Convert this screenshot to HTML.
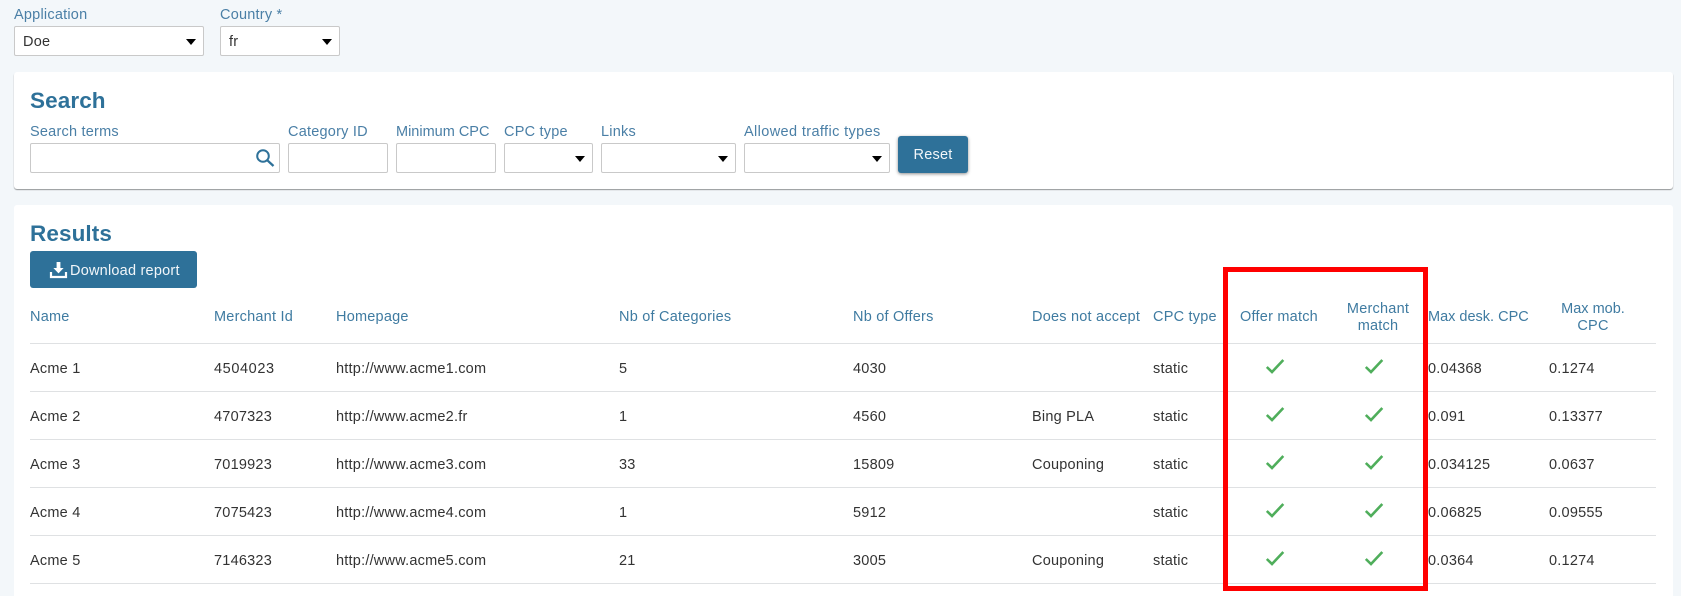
<!DOCTYPE html>
<html lang="en"><head><meta charset="utf-8"><title>Results</title>
<style>
html,body{margin:0;padding:0;width:1681px;height:596px;overflow:hidden;background:#f3f7fa}
body{position:relative;font-family:"Liberation Sans",Arial,sans-serif;font-size:14.5px;letter-spacing:.22px;color:#333}
div,span,svg{position:absolute}
.t{white-space:nowrap;line-height:20px;height:20px;margin-top:1px}
.l{color:#4a7fa6}
.h{color:#3f7ba1}
.c{transform:translateX(-50%);text-align:center}
.card{background:#fff;left:14px;width:1659px;border-radius:3px}
.f{background:#fff;border:1px solid #c9c9c9;border-radius:2px;box-sizing:border-box;height:30px}
.a{width:0;height:0;border-left:5.5px solid transparent;border-right:5.5px solid transparent;border-top:6px solid #000}
.title{font-weight:bold;font-size:22.5px;letter-spacing:.1px;color:#2e7199;line-height:28px;height:28px;white-space:nowrap}
.btn{background:#2e7199;color:#f2f6f9;border-radius:3px;text-align:center}
.ln{left:30px;width:1626px;height:1px;background:#dfe1e3}
.ck{width:20px;height:16px}
.ck path{fill:none;stroke:#4fae5b;stroke-width:2.6}
#box{left:1223px;top:267px;width:205px;height:324px;box-sizing:border-box;border:5px solid #ff0000}
</style></head><body>

<div class="t l" style="left:14px;top:4px">Application</div>
<div class="f" style="left:14px;top:26px;width:190px"></div>
<div class="t" style="left:23px;top:31px">Doe</div>
<div class="a" style="left:185.5px;top:39px"></div>
<div class="t l" style="left:220px;top:4px">Country *</div>
<div class="f" style="left:220px;top:26px;width:120px"></div>
<div class="t" style="left:229px;top:31px">fr</div>
<div class="a" style="left:321.5px;top:39px"></div>

<div class="card" style="top:72px;height:117px;box-shadow:0 1px 1px rgba(0,0,0,.4)"></div>
<div class="title" style="left:30px;top:87px">Search</div>
<div class="t l" style="left:30px;top:121px">Search terms</div>
<div class="f" style="left:30px;top:143px;width:250px"></div>
<svg style="left:255px;top:148px" width="20" height="19" viewBox="0 0 20 19"><circle cx="8" cy="8" r="5.8" fill="none" stroke="#2e7199" stroke-width="2"/><path d="M12.2 12.2L18.5 18" fill="none" stroke="#2e7199" stroke-width="2.3"/></svg>
<div class="t l" style="left:288px;top:121px">Category ID</div>
<div class="f" style="left:288px;top:143px;width:100px"></div>
<div class="t l" style="left:396px;top:121px;letter-spacing:0">Minimum CPC</div>
<div class="f" style="left:396px;top:143px;width:100px"></div>
<div class="t l" style="left:504px;top:121px">CPC type</div>
<div class="f" style="left:504px;top:143px;width:89px"></div>
<div class="a" style="left:574.5px;top:156px"></div>
<div class="t l" style="left:601px;top:121px">Links</div>
<div class="f" style="left:601px;top:143px;width:135px"></div>
<div class="a" style="left:717.5px;top:156px"></div>
<div class="t l" style="left:744px;top:121px;letter-spacing:.38px">Allowed traffic types</div>
<div class="f" style="left:744px;top:143px;width:146px"></div>
<div class="a" style="left:871.5px;top:156px"></div>
<div class="btn" style="left:898px;top:136px;width:70px;height:37px;line-height:38px;white-space:nowrap;box-shadow:0 1px 3px rgba(0,0,0,.45)">Reset</div>

<div class="card" style="top:205px;height:391px;border-radius:3px 3px 0 0"></div>
<div class="title" style="left:30px;top:220px">Results</div>
<div class="btn" style="left:30px;top:251px;width:167px;height:37px"></div>
<svg style="left:49px;top:261px" width="19" height="18" viewBox="0 0 19 18"><path d="M7.6 1H11.4V7H14.6L9.5 12.4L4.4 7H7.6Z" fill="#fff"/><path d="M2 11V16H17V11" fill="none" stroke="#fff" stroke-width="2.2"/></svg>
<div class="t" style="left:70px;top:260px;color:#f2f6f9">Download report</div>

<!-- header -->
<div class="t h" style="left:30px;top:306px">Name</div>
<div class="t h" style="left:214px;top:306px">Merchant Id</div>
<div class="t h" style="left:336px;top:306px">Homepage</div>
<div class="t h" style="left:619px;top:306px">Nb of Categories</div>
<div class="t h" style="left:853px;top:306px">Nb of Offers</div>
<div class="t h" style="left:1032px;top:306px">Does not accept</div>
<div class="t h" style="left:1153px;top:306px">CPC type</div>
<div class="t h c" style="left:1279px;top:306px">Offer match</div>
<div class="t h c" style="left:1378px;top:298px">Merchant</div>
<div class="t h c" style="left:1378px;top:315px">match</div>
<div class="t h" style="left:1428px;top:306px;letter-spacing:0">Max desk. CPC</div>
<div class="t h c" style="left:1593px;top:298px;letter-spacing:0">Max mob.</div>
<div class="t h c" style="left:1593px;top:315px">CPC</div>

<div class="ln" style="top:343px"></div>
<div class="ln" style="top:391px"></div>
<div class="ln" style="top:439px"></div>
<div class="ln" style="top:487px"></div>
<div class="ln" style="top:535px"></div>
<div class="ln" style="top:583px"></div>

<!-- row 1 -->
<div class="t" style="left:30px;top:358px">Acme 1</div>
<div class="t" style="left:214px;top:358px;letter-spacing:.6px">4504023</div>
<div class="t" style="left:336px;top:358px">http://www.acme1.com</div>
<div class="t" style="left:619px;top:358px">5</div>
<div class="t" style="left:853px;top:358px">4030</div>
<div class="t" style="left:1153px;top:358px">static</div>
<div class="t" style="left:1428px;top:358px">0.04368</div>
<div class="t" style="left:1549px;top:358px">0.1274</div>
<!-- row 2 -->
<div class="t" style="left:30px;top:406px">Acme 2</div>
<div class="t" style="left:214px;top:406px">4707323</div>
<div class="t" style="left:336px;top:406px">http://www.acme2.fr</div>
<div class="t" style="left:619px;top:406px">1</div>
<div class="t" style="left:853px;top:406px">4560</div>
<div class="t" style="left:1032px;top:406px">Bing PLA</div>
<div class="t" style="left:1153px;top:406px">static</div>
<div class="t" style="left:1428px;top:406px">0.091</div>
<div class="t" style="left:1549px;top:406px">0.13377</div>
<!-- row 3 -->
<div class="t" style="left:30px;top:454px">Acme 3</div>
<div class="t" style="left:214px;top:454px">7019923</div>
<div class="t" style="left:336px;top:454px">http://www.acme3.com</div>
<div class="t" style="left:619px;top:454px">33</div>
<div class="t" style="left:853px;top:454px">15809</div>
<div class="t" style="left:1032px;top:454px">Couponing</div>
<div class="t" style="left:1153px;top:454px">static</div>
<div class="t" style="left:1428px;top:454px">0.034125</div>
<div class="t" style="left:1549px;top:454px">0.0637</div>
<!-- row 4 -->
<div class="t" style="left:30px;top:502px">Acme 4</div>
<div class="t" style="left:214px;top:502px">7075423</div>
<div class="t" style="left:336px;top:502px">http://www.acme4.com</div>
<div class="t" style="left:619px;top:502px">1</div>
<div class="t" style="left:853px;top:502px">5912</div>
<div class="t" style="left:1153px;top:502px">static</div>
<div class="t" style="left:1428px;top:502px">0.06825</div>
<div class="t" style="left:1549px;top:502px">0.09555</div>
<!-- row 5 -->
<div class="t" style="left:30px;top:550px">Acme 5</div>
<div class="t" style="left:214px;top:550px">7146323</div>
<div class="t" style="left:336px;top:550px">http://www.acme5.com</div>
<div class="t" style="left:619px;top:550px">21</div>
<div class="t" style="left:853px;top:550px">3005</div>
<div class="t" style="left:1032px;top:550px">Couponing</div>
<div class="t" style="left:1153px;top:550px">static</div>
<div class="t" style="left:1428px;top:550px">0.0364</div>
<div class="t" style="left:1549px;top:550px">0.1274</div>

<!-- checks -->
<svg class="ck" style="left:1265px;top:358px" viewBox="0 0 20 16"><path d="M1.8 9L7 14L18.3 2"/></svg>
<svg class="ck" style="left:1364px;top:358px" viewBox="0 0 20 16"><path d="M1.8 9L7 14L18.3 2"/></svg>
<svg class="ck" style="left:1265px;top:406px" viewBox="0 0 20 16"><path d="M1.8 9L7 14L18.3 2"/></svg>
<svg class="ck" style="left:1364px;top:406px" viewBox="0 0 20 16"><path d="M1.8 9L7 14L18.3 2"/></svg>
<svg class="ck" style="left:1265px;top:454px" viewBox="0 0 20 16"><path d="M1.8 9L7 14L18.3 2"/></svg>
<svg class="ck" style="left:1364px;top:454px" viewBox="0 0 20 16"><path d="M1.8 9L7 14L18.3 2"/></svg>
<svg class="ck" style="left:1265px;top:502px" viewBox="0 0 20 16"><path d="M1.8 9L7 14L18.3 2"/></svg>
<svg class="ck" style="left:1364px;top:502px" viewBox="0 0 20 16"><path d="M1.8 9L7 14L18.3 2"/></svg>
<svg class="ck" style="left:1265px;top:550px" viewBox="0 0 20 16"><path d="M1.8 9L7 14L18.3 2"/></svg>
<svg class="ck" style="left:1364px;top:550px" viewBox="0 0 20 16"><path d="M1.8 9L7 14L18.3 2"/></svg>

<div id="box"></div>
</body></html>
